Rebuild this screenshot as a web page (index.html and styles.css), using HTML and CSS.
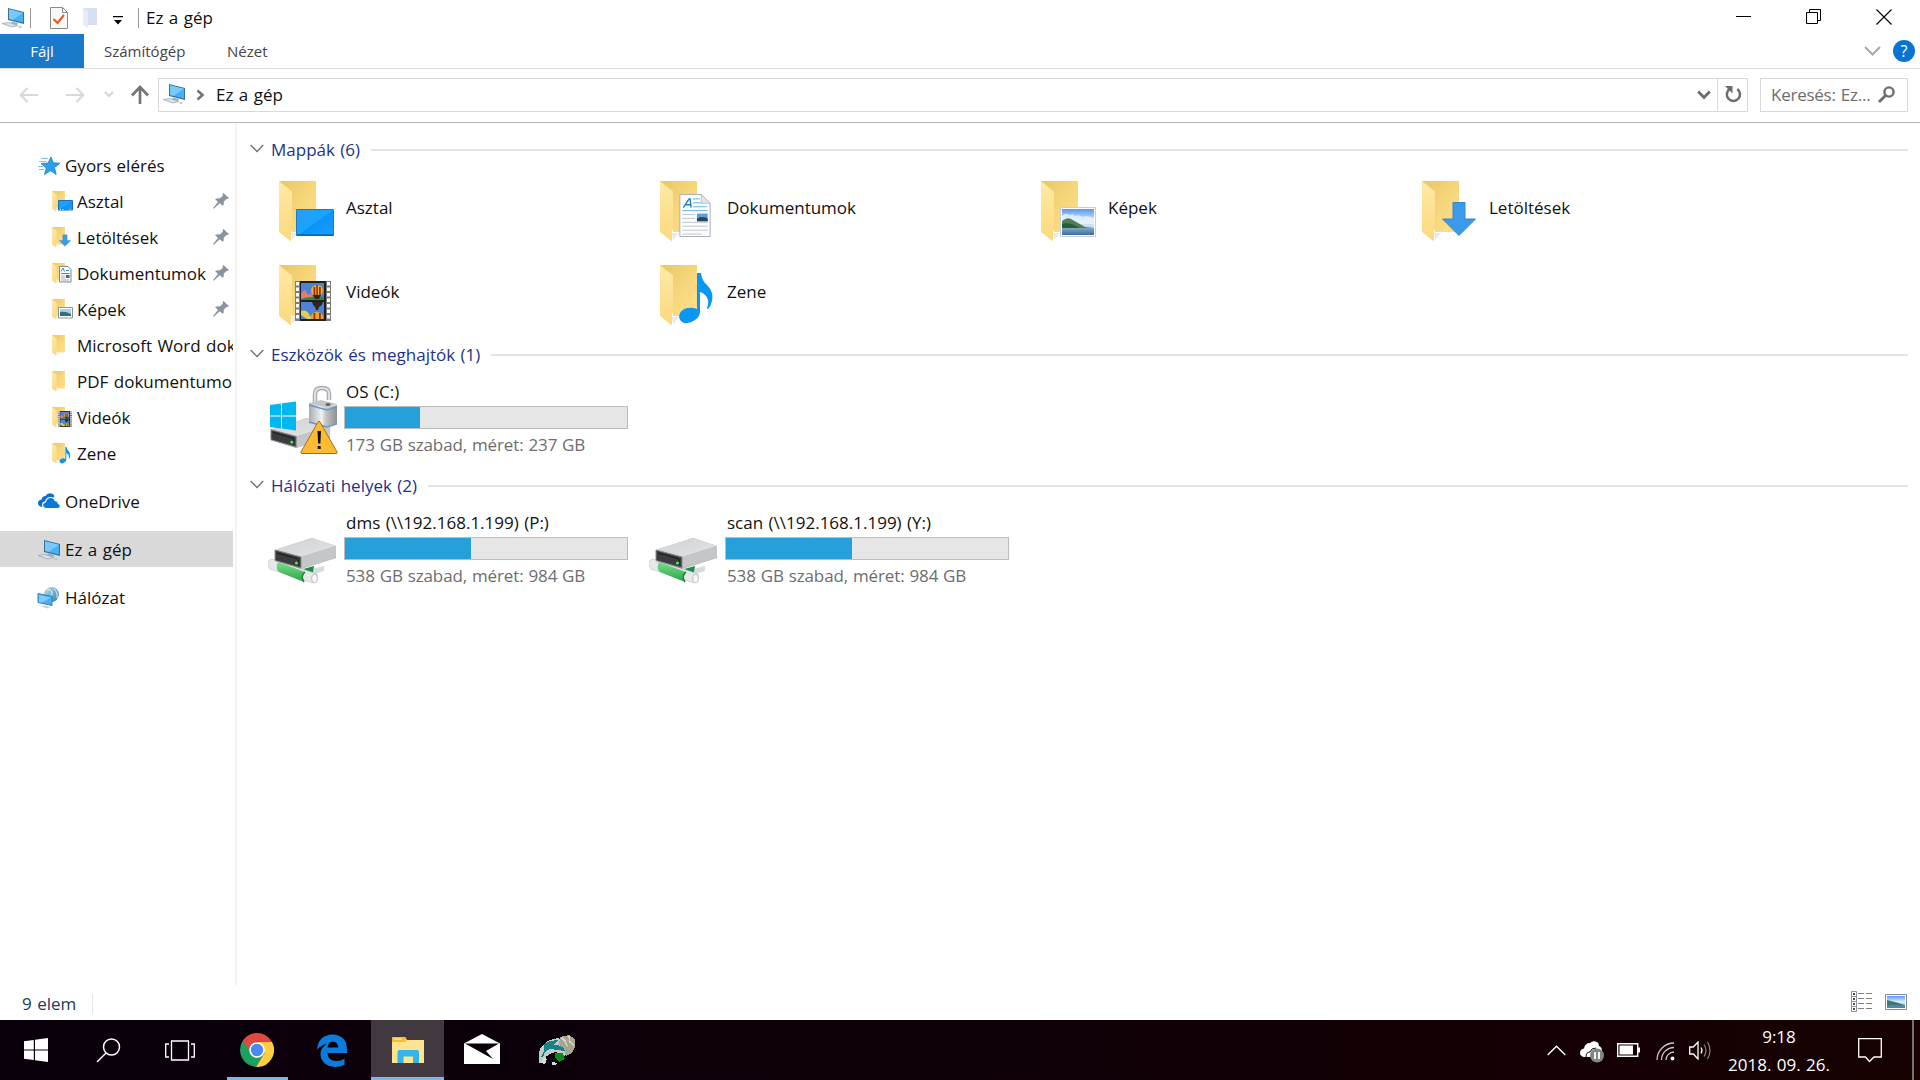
FILE: index.html
```
<!DOCTYPE html>
<html lang="hu">
<head>
    <meta charset="UTF-8">
    <title>Ez a gép</title>
    <link rel="stylesheet" href="styles.css">
</head>
<body>
    <svg class="defs" width="0" height="0">
        <defs>
            <linearGradient id="g-back" x1="0" y1="0" x2="1" y2="1">
                <stop offset="0" stop-color="#e8c664"/><stop offset="0.5" stop-color="#f6d67a"/><stop offset="1" stop-color="#ffe08a"/>
            </linearGradient>
            <linearGradient id="g-flap" x1="0" y1="0" x2="0" y2="1">
                <stop offset="0" stop-color="#ffe9a6"/><stop offset="1" stop-color="#fbd97c"/>
            </linearGradient>
            <linearGradient id="g-blue" x1="0" y1="0" x2="1" y2="1">
                <stop offset="0" stop-color="#2a9df4"/><stop offset="0.5" stop-color="#18a4ff"/><stop offset="0.52" stop-color="#0a94f8"/><stop offset="1" stop-color="#1e9bff"/>
            </linearGradient>
            <linearGradient id="g-sky" x1="0" y1="0" x2="0" y2="1">
                <stop offset="0" stop-color="#5b97ee"/><stop offset="0.45" stop-color="#d3e8fb"/><stop offset="0.7" stop-color="#c8dcea"/>
            </linearGradient>
            <linearGradient id="g-sea" x1="0" y1="0" x2="0" y2="1">
                <stop offset="0" stop-color="#7fa9c4"/><stop offset="1" stop-color="#3c6f9f"/>
            </linearGradient>
            <linearGradient id="g-metal" x1="0" y1="0" x2="1" y2="0">
                <stop offset="0" stop-color="#a9abae"/><stop offset="0.45" stop-color="#f1f2f3"/><stop offset="0.6" stop-color="#c2c4c7"/><stop offset="1" stop-color="#8d9095"/>
            </linearGradient>
            <linearGradient id="g-top" x1="0" y1="0" x2="1" y2="1">
                <stop offset="0" stop-color="#cfd0d2"/><stop offset="1" stop-color="#e4e5e7"/>
            </linearGradient>
            <linearGradient id="g-green" x1="0" y1="0" x2="0" y2="1">
                <stop offset="0" stop-color="#77e08a"/><stop offset="1" stop-color="#2da244"/>
            </linearGradient>
            <linearGradient id="g-globe" x1="0" y1="0" x2="1" y2="1">
                <stop offset="0" stop-color="#c3e2f0"/><stop offset="1" stop-color="#2f7fa8"/>
            </linearGradient>
        </defs>
        <symbol id="folder" viewBox="0 0 37 61">
            <path d="M12 52h7l-6 7z" fill="#e9e9e9"/>
            <path d="M0 0h37v51H13z" fill="url(#g-back)"/>
            <path d="M0 0l13 10.500V44l-1 2v14.500L0 51z" fill="url(#g-flap)"/>
        </symbol>
        <symbol id="photo" viewBox="0 0 36 30">
            <path d="M0 0h36v30H0z" fill="#fff"/>
            <path d="M.5.5h35v29H.5z" fill="none" stroke="#c9ced3"/>
            <path d="M2 2h32v26H2z" fill="url(#g-sky)"/>
            <path d="M2 9q4-4 7-1 4-2 6 1 4-2 7 1 6-2 12 1v6H2z" fill="#e9f3fc" opacity=".8"/>
            <path d="M2 14q5-4 9-2l7 4 7 4 9 1v1H2z" fill="#4d7f55"/>
            <path d="M2 17q6-2 12 1l8 4H2z" fill="#2c5a3b"/>
            <path d="M2 21h32v7H2z" fill="url(#g-sea)"/>
        </symbol>
        <symbol id="film" viewBox="0 0 36 40">
            <path d="M0 0h36v40H0z" fill="#7c7c7c"/>
            <path d="M5 0h26v40H5z" fill="#1f1f1f"/>
            <path d="M6 2h23v17H6zM6 21h23v17H6z" fill="#4c83d8"/>
            <path d="M6 12l4-3 3 5 3-2 3 7H6z" fill="#e27a75"/>
            <path d="M6 18q8-3 23-2v3H6z" fill="#2e8a36"/>
            <path d="M6 30q6-2 9 5l2 3h-5l-6-4z" fill="#e3cf4e"/>
            <path d="M22 4q6 0 6 6 0 3-4 6h-4q-4-3-4-6 0-6 6-6z" fill="#e3b423"/>
            <path d="M18.500 6h1.800v8h-1.800zM24 6h1.800v8H24zM21.300 4h1.600v10h-1.600z" fill="#a72b1c"/>
            <path d="M18 14h8l-2 4h-4zM17 21h11q-1 4-4 5l-1 3h-2l-1-3q-2-1-3-5z" fill="#33241c"/>
            <path d="M22 31q5 0 6 4v3H16v-3q1-4 6-4z" fill="#e3a923"/>
            <path d="M18.500 32h1.800v6h-1.800zM24 32h1.800v6H24z" fill="#a72b1c"/>
            <path d="M2.500 1v38M33.500 1v38" stroke="#fff" stroke-width="3" stroke-dasharray="3.500 2"/>
        </symbol>
        <symbol id="note" viewBox="0 0 34 52">
            <path d="M18 0h4q1 8 6 12 7 7 5 16-1 5-4 8-1 0-1-1 3-7-1-12-2-3-6-4v19q0 6-5 9-5 4-11 3-5-2-5-7 1-6 8-8 5-1 10 1z" fill="#0a96f5"/>
        </symbol>
        <symbol id="sheet" viewBox="0 0 32 44">
            <path d="M.5.5h22l9 9v34H.5z" fill="#fbfcfd" stroke="#a9aeb4"/>
            <path d="M22.500.5v9h9z" fill="#e1e5e9" stroke="#b3b8be" stroke-width=".8"/>
            <path d="M14 5h7M14 9h8M14 13h14M3 17h26" stroke="#5fb4e3"/>
            <path d="M3 21h13M3 25h13M3 29h26M3 33h26M3 37h26M3 41h20" stroke="#c3c7cc"/>
            <path d="M18 20h11v8H18z" fill="#5f9ed4"/><path d="M18 25q5-3 11 0v3H18z" fill="#1f4a66"/>
            <path d="M4 14L10 5l1 0 1 9M6.500 11h5" fill="none" stroke="#1f7fc4" stroke-width="1.400"/>
        </symbol>
        <symbol id="down" viewBox="0 0 34 34">
            <path d="M11 .5h12V17h10.500L17 33.500.5 17H11z" fill="#3b9be8" stroke="#3187d2"/>
        </symbol>
        <symbol id="pc" viewBox="0 0 24 22">
            <path d="M7 1l16 4v12L7 13z" fill="#3a6f93"/>
            <path d="M8 2.300l14 3.500v9.800L8 12z" fill="#45b0fa"/>
            <path d="M8 2.300l14 3.500-10 7L8 12z" fill="#76c8fd"/>
            <path d="M11 14.500l6 1.500-1 2-6-1.500z" fill="#9db1bd"/>
            <path d="M1 16.500l7-1 9 3-6 1.500z" fill="#dbe3e8" stroke="#8fa3b0" stroke-width=".7"/>
            <path d="M18 19l3 .5-1 1.500-3-.5z" fill="#b5c2ca"/>
        </symbol>
        <symbol id="drive" viewBox="0 0 64 32">
            <path d="M1 12L38 0l24 8v12L27 31 1 23z" fill="#a6a7a9"/>
            <path d="M1 11.500L37 .5q1.500-.5 3 0L62 8 29 18.500q-1 .5-2 .3z" fill="url(#g-top)"/>
            <path d="M27 19l35-11v10q0 1.500-1.500 2L27 31z" fill="#c5c6c8"/>
            <path d="M1 12l26 7v11L1 22.500z" fill="#3b3c3e"/>
            <path d="M1 12l26 7v11L1 22.500z" fill="none" stroke="#8e8f91" stroke-width="1"/>
            <path d="M3 15l21 6v6" fill="none" stroke="#1b1b1c"/>
            <circle cx="22.500" cy="25" r="1.500" fill="#4cf04c"/>
        </symbol>
        <symbol id="netdrive" viewBox="0 0 72 72">
            <g transform="translate(-2 0)">
                <path d="M30 59l28-7v5l-22 7z" fill="#d9dcde"/>
                <path d="M30 57l18-5-1 6-12 7z" fill="#1b8c49"/>
                <path d="M2 47q3-3 7-1l42 14q1 6-4 9L4 55q-3-3-2-8z" fill="#e6e8ea" stroke="#c3c7ca" stroke-width=".7"/>
                <path d="M12 48l27 10q-4 5-1 10L13 58q-4-4-1-10z" fill="url(#g-green)"/>
                <path d="M39 58q-5 4-1 10" stroke="#18803a" stroke-width="1.500" fill="none"/>
                <ellipse cx="48.500" cy="64.500" rx="2.800" ry="4.200" fill="#f6f7f8" stroke="#b7bbbf"/>
            </g>
            <use href="#drive" x="6" y="24" width="64" height="32"/>
        </symbol>
        <symbol id="pin" viewBox="0 0 16 16">
            <path d="M10.500 0L16 5.200l-1.500.8-1 0-2.800 2.800q.6 2.500-.8 4.200L6.800 10.200 1 15.500H0V15l5-6-3-3q2.500-1 4.500-.5L9.700 3V1z" fill="#8a949e"/>
        </symbol>
        <symbol id="chev" viewBox="0 0 14 9">
            <path d="M.7 1L7 7.500 13.300 1" fill="none" stroke="#6e6e6e" stroke-width="1.300"/>
        </symbol>
    </svg>

    <div class="window">
        <header class="titlebar">
            <svg class="app-icon" width="24" height="22"><use href="#pc"/></svg>
            <span class="sep"></span>
            <svg class="qa-check" width="18" height="22" viewBox="0 0 18 22"><path d="M.5.5h12l5 5v16H.5z" fill="#f8f8f8" stroke="#8a8a8a"/><path d="M12.500.5v5h5" fill="none" stroke="#8a8a8a"/><path d="M3.500 12l4 4 6.500-8" fill="none" stroke="#e8541c" stroke-width="2"/></svg>
            <svg class="qa-folder" width="14" height="22" viewBox="0 0 14 22"><path d="M0 1h14v17H5z" fill="#d7e0f2"/><path d="M0 1l5 3v17l-5-3z" fill="#e5ebf7"/></svg>
            <svg class="qa-more" width="10" height="9" viewBox="0 0 10 9"><path d="M0 0h10v1.300H0zM1 4h8L5 8.500z" fill="#000"/></svg>
            <span class="sep"></span>
            <span class="title">Ez a gép</span>
            <div class="controls">
                <svg width="16" height="16" viewBox="0 0 16 16"><path d="M0 7.500h15" stroke="#000"/></svg>
                <svg width="16" height="16" viewBox="0 0 16 16"><path d="M.5 3.500h11v11H.5zM3.500 3.500V.5h11v11h-3" fill="none" stroke="#000"/></svg>
                <svg width="16" height="16" viewBox="0 0 16 16"><path d="M.5.5l15 15M15.500.5l-15 15" stroke="#000" stroke-width="1.100"/></svg>
            </div>
        </header>

        <nav class="ribbon">
            <span class="tab file">Fájl</span>
            <span class="tab computer">Számítógép</span>
            <span class="tab view">Nézet</span>
            <svg class="expand" width="17" height="10" viewBox="0 0 17 10"><path d="M1 1l7.500 7.500L16 1" fill="none" stroke="#a8a8a8" stroke-width="2"/></svg>
            <span class="help">?</span>
        </nav>

        <div class="addressbar">
            <svg class="back" width="20" height="16" viewBox="0 0 20 16"><path d="M19 8H2M8.500 1L1.800 8l6.700 7" fill="none" stroke="#d9d9d9" stroke-width="2.200"/></svg>
            <svg class="forward" width="20" height="16" viewBox="0 0 20 16"><path d="M1 8h17M11.500 1l6.700 7-6.700 7" fill="none" stroke="#d9d9d9" stroke-width="2.200"/></svg>
            <svg class="recent" width="10" height="7" viewBox="0 0 10 7"><path d="M1 1l4 4 4-4" fill="none" stroke="#d5d5d5" stroke-width="2"/></svg>
            <svg class="up" width="18" height="20" viewBox="0 0 18 20"><path d="M9 19V3M1 10.500L9 2l8 8.500" fill="none" stroke="#757575" stroke-width="2.700"/></svg>
            <div class="path">
                <svg class="path-icon" width="24" height="22"><use href="#pc"/></svg>
                <svg class="path-arrow" width="9" height="12" viewBox="0 0 9 12"><path d="M1.500 1.500L6.500 6l-5 4.500" fill="none" stroke="#757575" stroke-width="2.600"/></svg>
                <span>Ez a gép</span>
                <svg class="path-drop" width="14" height="10" viewBox="0 0 14 10"><path d="M1.200 1.500L7 7.500l5.800-6" fill="none" stroke="#6d6d6d" stroke-width="2.800"/></svg>
                <span class="refresh"><svg width="17" height="17" viewBox="0 0 17 17"><path d="M12.300 3A6.600 6.600 0 1 1 4.500 3" fill="none" stroke="#6d6d6d" stroke-width="2.500"/><path d="M0 0h7.500v7.500L5 5z" fill="#6d6d6d"/></svg></span>
            </div>
            <div class="search">
                <span>Keresés: Ez...</span>
                <svg width="17" height="17" viewBox="0 0 17 17"><circle cx="11" cy="6" r="4.600" fill="none" stroke="#6d6d6d" stroke-width="2.400"/><path d="M7.500 9.500L1 16" stroke="#6d6d6d" stroke-width="2.800"/></svg>
            </div>
        </div>

        <div class="body">
            <aside class="sidebar">
                <div class="nav root">
                    <svg class="nav-icon" width="24" height="22" viewBox="0 0 24 22"><path d="M14 2l2.200 5.800 6.800.4-5.500 4.300 1.700 7-5.700-3.800-6 3.800L9.300 13 4 8.500l7-.5z" fill="#2aa0ea" stroke="#1d7cc4" stroke-width=".8"/><path d="M4 3.500h7M2 6.500h7M1 11.500h5M2 14.500h5" stroke="#7cc4f0"/></svg>
                    <span>Gyors elérés</span>
                </div>
                <div class="nav">
                    <svg class="nav-icon" width="22" height="22" viewBox="0 0 22 22"><use href="#folder" width="13" height="21"/><path d="M6.500 9.500h14v9.500h-14z" fill="url(#g-blue)" stroke="#1b6fae"/><path d="M8 18.500h11" stroke="#d9efff" stroke-dasharray="1 1.500 1 6"/></svg>
                    <span>Asztal</span><svg class="pin" width="16" height="16"><use href="#pin"/></svg>
                </div>
                <div class="nav">
                    <svg class="nav-icon" width="22" height="22" viewBox="0 0 22 22"><use href="#folder" width="13" height="21"/><use href="#down" x="7" y="7" width="12" height="13"/></svg>
                    <span>Letöltések</span><svg class="pin" width="16" height="16"><use href="#pin"/></svg>
                </div>
                <div class="nav">
                    <svg class="nav-icon" width="22" height="22" viewBox="0 0 22 22"><use href="#folder" width="13" height="21"/><path d="M7.500 3.500h8.500l3 3V19H7.500z" fill="#fff" stroke="#7f858b"/><path d="M9 8.500L11 5l1.500 3.500M14 7.500h3M9 10.500h8.500" fill="none" stroke="#2a94d6"/><path d="M9 13h4M9 15h4M9 17h8" stroke="#8b9198" stroke-width=".8"/><path d="M14 12h3.500v3H14z" fill="#376c8e"/></svg>
                    <span>Dokumentumok</span><svg class="pin" width="16" height="16"><use href="#pin"/></svg>
                </div>
                <div class="nav">
                    <svg class="nav-icon" width="22" height="22" viewBox="0 0 22 22"><use href="#folder" width="13" height="21"/><path d="M6.500 8.500h14V19h-14z" fill="#fff" stroke="#8d959c"/><path d="M8 10h11v7H8z" fill="#a9cef0"/><path d="M8 13q5-1 11 2v2H8z" fill="#356e76"/></svg>
                    <span>Képek</span><svg class="pin" width="16" height="16"><use href="#pin"/></svg>
                </div>
                <div class="nav">
                    <svg class="nav-icon" width="22" height="22" viewBox="0 0 22 22"><use href="#folder" width="13" height="21"/></svg>
                    <span>Microsoft Word dok</span>
                </div>
                <div class="nav">
                    <svg class="nav-icon" width="22" height="22" viewBox="0 0 22 22"><use href="#folder" width="13" height="21"/></svg>
                    <span>PDF dokumentumo</span>
                </div>
                <div class="nav">
                    <svg class="nav-icon" width="22" height="22" viewBox="0 0 22 22"><use href="#folder" width="13" height="21"/><use href="#film" x="6" y="4" width="14" height="16"/></svg>
                    <span>Videók</span>
                </div>
                <div class="nav">
                    <svg class="nav-icon" width="22" height="22" viewBox="0 0 22 22"><use href="#folder" width="13" height="21"/><use href="#note" x="7" y="4" width="12" height="17"/></svg>
                    <span>Zene</span>
                </div>
                <div class="nav root spaced">
                    <svg class="nav-icon" width="24" height="22" viewBox="0 0 24 22"><path d="M5 16q-4-.5-4-4 0-3 3.500-3.500Q5 5 8.500 5q2-3.500 6-2.500 2.500.7 3 3" fill="#0e6fc9"/><path d="M9 17.500q-3.500-.5-3.500-3.500 0-2.500 3-3.200Q9.500 6.500 13.500 6.500q3.500 0 4.800 3.200 2.700 0 3 2.800 2 .7 2 2.500 0 2.500-2.500 2.500z" fill="#0b78d8" stroke="#fff" stroke-width="1.200"/></svg>
                    <span>OneDrive</span>
                </div>
                <div class="nav root spaced active">
                    <svg class="nav-icon" width="24" height="22"><use href="#pc"/></svg>
                    <span>Ez a gép</span>
                </div>
                <div class="nav root spaced">
                    <svg class="nav-icon" width="24" height="22" viewBox="0 0 24 22"><circle cx="14.500" cy="7.500" r="7.500" fill="url(#g-globe)"/><path d="M10 3q4-1 5 2t-3 5M17 2q4 3 3 9" fill="none" stroke="#e6f4fa"/><path d="M1 6.500l14 3v9l-14-3z" fill="#45b0fa" stroke="#2d77a8" stroke-width=".9"/><path d="M2 8l12 2.500-9 5-3-.5z" fill="#7fccfd"/><path d="M6 18.500l7 1.500-2 1.500-6-1.500z" fill="#c4cfd6"/></svg>
                    <span>Hálózat</span>
                </div>
            </aside>

            <main class="content">
                <section class="group">
                    <h2><svg width="14" height="9"><use href="#chev"/></svg><span>Mappák (6)</span></h2>
                    <div class="tiles folders">
                        <div class="tile"><svg width="72" height="72" viewBox="0 0 72 72"><use href="#folder" x="11" y="6" width="37" height="61"/><path d="M28.500 34.500h37v26h-37z" fill="url(#g-blue)" stroke="#2178b8"/><path d="M29 60h36" stroke="#0f4e80"/></svg><span>Asztal</span></div>
                        <div class="tile"><svg width="72" height="72" viewBox="0 0 72 72"><use href="#folder" x="11" y="6" width="37" height="61"/><use href="#sheet" x="30" y="19" width="32" height="43"/></svg><span>Dokumentumok</span></div>
                        <div class="tile"><svg width="72" height="72" viewBox="0 0 72 72"><use href="#folder" x="11" y="6" width="37" height="61"/><use href="#photo" x="29" y="32" width="38" height="30"/></svg><span>Képek</span></div>
                        <div class="tile"><svg width="72" height="72" viewBox="0 0 72 72"><use href="#folder" x="11" y="6" width="37" height="61"/><use href="#down" x="31" y="27" width="34" height="34"/></svg><span>Letöltések</span></div>
                        <div class="tile"><svg width="72" height="72" viewBox="0 0 72 72"><use href="#folder" x="11" y="6" width="37" height="61"/><use href="#film" x="27" y="22" width="36" height="40"/></svg><span>Videók</span></div>
                        <div class="tile"><svg width="72" height="72" viewBox="0 0 72 72"><use href="#folder" x="11" y="6" width="37" height="61"/><use href="#note" x="30" y="14" width="34" height="52"/></svg><span>Zene</span></div>
                    </div>
                </section>

                <section class="group">
                    <h2><svg width="14" height="9"><use href="#chev"/></svg><span>Eszközök és meghajtók (1)</span></h2>
                    <div class="tiles drives">
                        <div class="tile">
                            <svg width="72" height="72" viewBox="0 0 72 72">
                                <use href="#drive" x="2" y="35" width="62" height="31"/>
                                <path d="M47 20v-9q0-6 7-6 7 0 7 6v6" fill="none" stroke="#a3a7ab" stroke-width="4.500"/>
                                <path d="M47 20v-9q0-6 7-6 7 0 7 6v6" fill="none" stroke="#dfe1e4" stroke-width="2.200"/>
                                <path d="M41 20l18 5 10-3v19l-10 4-18-5z" fill="url(#g-metal)"/>
                                <path d="M41 20l12-3 16 4-10 4z" fill="#c2c6ca"/>
                                <path d="M41 22l18 5 10-3M41 39l18 5 10-3" fill="none" stroke="#5f9cc4" stroke-width="1.300"/>
                                <ellipse cx="60" cy="21.500" rx="2.500" ry="1.200" fill="#555"/>
                                <path d="M2 22l11-1.500v12H2zM14 20.300L28 18.500v14H14zM2 33.500h11v12L2 44zM14 33.500h14V47.500l-14-2z" fill="#00b7f0"/>
                                <path d="M50 39q1-2 2 0l17 30q.5 1.500-1 1.500H34q-1.500 0-1-1.500z" fill="#fdbb33" stroke="#a86c17"/>
                                <path d="M49.500 48h3.500l-.6 12.500h-2.300zM49.700 63h3v3h-3z" fill="#111"/>
                            </svg>
                            <div class="info"><p>OS (C:)</p><div class="bar"><i style="width: 26.6%"></i></div><p class="free">173 GB szabad, méret: 237 GB</p></div>
                        </div>
                    </div>
                </section>

                <section class="group">
                    <h2><svg width="14" height="9"><use href="#chev"/></svg><span>Hálózati helyek (2)</span></h2>
                    <div class="tiles drives">
                        <div class="tile">
                            <svg width="72" height="72"><use href="#netdrive"/></svg>
                            <div class="info"><p>dms (\\192.168.1.199) (P:)</p><div class="bar"><i style="width: 44.7%"></i></div><p class="free">538 GB szabad, méret: 984 GB</p></div>
                        </div>
                        <div class="tile">
                            <svg width="72" height="72"><use href="#netdrive"/></svg>
                            <div class="info"><p>scan (\\192.168.1.199) (Y:)</p><div class="bar"><i style="width: 44.7%"></i></div><p class="free">538 GB szabad, méret: 984 GB</p></div>
                        </div>
                    </div>
                </section>
            </main>
        </div>

        <footer class="status">
            <span class="count">9 elem</span>
            <svg class="view-list" width="22" height="22" viewBox="0 0 22 22"><path d="M.5.500h5v20h-5zM.5 5.500h5M.5 10.500h5M.5 15.500h5" fill="none" stroke="#8d939a"/><path d="M2 2h2v2H2zM2 7h2v2H2zM2 12h2v2H2zM2 17h2v2H2z" fill="#5b4a44"/><path d="M7 2.500h14M7 7.500h14M7 12.500h14M7 17.500h14" stroke="#808080" stroke-dasharray="6 2"/></svg>
            <svg class="view-large" width="22" height="16" viewBox="0 0 22 16"><path d="M.5.5h21v15H.5z" fill="#fff" stroke="#7e8d99"/><path d="M2 2h18v12H2z" fill="url(#g-sky)"/><path d="M2 6q9 2 18 5v3H2z" fill="#3c7c66"/><path d="M2 11h18v3H2z" fill="#4d86b4"/></svg>
        </footer>
    </div>

    <div class="taskbar">
        <div class="task start"><svg width="24" height="24" viewBox="0 0 24 24"><path d="M0 3.300l9.800-1.400v9.500H0zM11 1.700L24 0v11.400H11zM0 12.600h9.800v9.500L0 20.700zM11 12.600h13V24l-13-1.700z" fill="#fff"/></svg></div>
        <div class="task"><svg width="25" height="25" viewBox="0 0 25 25"><circle cx="15.500" cy="9" r="8" fill="none" stroke="#fff" stroke-width="1.500"/><path d="M10 15L1 24" stroke="#fff" stroke-width="1.500"/></svg></div>
        <div class="task"><svg width="30" height="21" viewBox="0 0 30 21"><path d="M6.500 1h17v19h-17zM4 4H.7v13H4M26 4h3.300v13H26" fill="none" stroke="#fff" stroke-width="1.300"/></svg></div>
        <div class="task open"><svg width="34" height="34" viewBox="0 0 34 34"><path d="M2.300 8.500A17 17 0 0 0 16 34l8-13-7-4z" fill="#1da160"/><path d="M31.700 8.500A17 17 0 0 1 16 34l8.500-14L17 8.500z" fill="#ffcd42"/><path d="M2.300 8.500A17 17 0 0 1 31.700 8.500H17L9.700 17z" fill="#dd4b3e"/><circle cx="17" cy="17" r="7.800" fill="#fff"/><circle cx="17" cy="17" r="6.200" fill="#4a8af4"/></svg></div>
        <div class="task edge"><svg width="32" height="33" viewBox="0 0 32 33"><path d="M1 15.500Q2.500 1 16.500.5 31 1 31 16v3H11.500q.5 8 9 8 4.500 0 8-2.300v6Q24 33 19 33 6 32 4.500 21 4 14 11 10 6 10.500 1 15.500zM11.500 13.500h10.700q-.3-5.700-5.400-5.700-4.600 0-5.300 5.700z" fill="#0b7bdc"/></svg></div>
        <div class="task explorer"><svg width="32" height="28" viewBox="0 0 32 28"><path d="M0 1h13l2 3h17v23H0z" fill="#fee391"/><path d="M0 1h13l2 3-2 2H0z" fill="#f8bf2b"/><path d="M2 3h8" stroke="#fff0c0"/><path d="M5.500 27V16q0-2 2-2h17.500q2 0 2 2v11H21v-6.500h-9.500V27z" fill="#36b3e8"/></svg></div>
        <div class="task mail"><svg width="36" height="30" viewBox="0 0 36 30"><path d="M0 9.500L18 0l18 9.500V30H0z" fill="#fff"/><path d="M1 9.500h34L22 17l7 8z" fill="#0a0008"/></svg></div>
        <div class="task lizard"><svg width="38" height="30" viewBox="0 0 38 30" shape-rendering="crispEdges"><path d="M2 13L9 6 20 3l3 2 8 6-1 8-6 3-9-3-7 2-2 7H1V19z" fill="#c9c9c9"/><path d="M6 9l6-3 8-1-4 5 9 1 4 3-3 2-6-1-8-1-5 3-2 5H3l3-6z" fill="#148585"/><path d="M22 2l9-2 6 4v8l-3 6-6 3-2-8-5-3z" fill="#a8a58e"/><path d="M24 3l3 3 2 5M31 1l1 6 4 3" fill="none" stroke="#d8d6cc" stroke-width="1.500"/><path d="M10 20l7-3 8 2-1 6-6 4-6-1z" fill="#08090a"/><path d="M17 18h8l2 6-6 3-4-4z" fill="#128a16"/><path d="M3 28l3-6 3 2-2 5zM14 27l5 1-1 2h-4z" fill="#d5dce0"/></svg></div>

        <div class="tray">
            <svg class="t-up" width="19" height="11" viewBox="0 0 19 11"><path d="M.7 10L9.500 1.200 18.300 10" fill="none" stroke="#fff" stroke-width="1.400"/></svg>
            <svg class="t-cloud" width="25" height="22" viewBox="0 0 25 22"><path d="M4 16q-4-1-4-4 0-4 4-4.500Q5 2 10 2q3-3 7-1 2 1 2 4 3 1 3 5v6z" fill="#fff"/><path d="M6 16q0-5 4-5 1-4 6-4" fill="none" stroke="#160003" stroke-width="1"/><circle cx="17" cy="14.500" r="7" fill="#858585"/><path d="M15 11v7M19 11v7" stroke="#fff" stroke-width="1.800"/></svg>
            <svg class="t-battery" width="23" height="14" viewBox="0 0 23 14"><path d="M.7.7h20v12.600H.7z" fill="none" stroke="#fff" stroke-width="1.400"/><path d="M2.500 2.500H16v9H2.500z" fill="#fff"/><path d="M21 4.500h2v5h-2z" fill="#fff"/></svg>
            <svg class="t-wifi" width="19" height="19" viewBox="0 0 19 19"><path d="M1 18A17 17 0 0 1 18 1M5.500 18A12.500 12.500 0 0 1 18 5.500M10 18a8 8 0 0 1 8-8" fill="none" stroke="#cfc9ca" stroke-width="1.300"/><circle cx="16.500" cy="16.500" r="1.900" fill="#fff"/></svg>
            <svg class="t-volume" width="24" height="19" viewBox="0 0 24 19"><path d="M.7 6h3.600L9 1v17l-4.700-5H.7z" fill="none" stroke="#fff" stroke-width="1.300"/><path d="M12 6.500q2 3 0 6" fill="none" stroke="#fff" stroke-width="1.200"/><path d="M15 3.500q4 6 0 12M18.500 1q5 8.500 0 17" fill="none" stroke="#8d8384" stroke-width="1.200"/></svg>
            <div class="clock"><span>9:18</span><span>2018. 09. 26.</span></div>
            <svg class="t-action" width="24" height="25" viewBox="0 0 24 25"><path d="M.7.700h22.600V19H16l-4.500 4.500L7.500 19H.7z" fill="none" stroke="#fff" stroke-width="1.300"/></svg>
        </div>
        <span class="show-desktop"></span>
    </div>
</body>
</html>
```
FILE: styles.css
```
* {
    box-sizing: border-box;
}
body {
    margin: 0;
    width: 1920px;
    height: 1080px;
    overflow: hidden;
    background-color: #fff;
    color: #111;
    font-family: "Open Sans", "Noto Sans", sans-serif;
    font-size: 17px;
    line-height: 24px;
    letter-spacing: 0;
    word-spacing: 1px;
}
svg {
    display: block;
    flex: none;
}
p, h2 {
    margin: 0;
    font-size: 17px;
    font-weight: normal;
}
.defs {
    position: absolute;
}
.window {
    display: flex;
    flex-direction: column;
    height: 1020px;
}

/* title bar */
.titlebar {
    display: flex;
    align-items: center;
    height: 34px;
    flex: none;
    padding: 2px 28px 0 1px;
}
.sep {
    width: 1px;
    height: 20px;
    background-color: #999;
}
.app-icon {
    margin-right: 5px;
}
.qa-check {
    margin-left: 19px;
}
.qa-folder {
    margin-left: 15px;
}
.qa-more {
    margin: 4px 15px 0 16px;
}
.title {
    margin-left: 7px;
}
.controls {
    display: flex;
    gap: 54px;
    margin-left: auto;
    margin-top: -2px;
}

/* ribbon tabs */
.ribbon {
    display: flex;
    align-items: center;
    height: 35px;
    flex: none;
    border-bottom: 1px solid #dadbdc;
    font-size: 15px;
    color: #444;
}
.tab.file {
    width: 84px;
    height: 34px;
    line-height: 34px;
    text-align: center;
    background-color: #1979ca;
    color: #fff;
}
.tab.computer {
    margin-left: 20px;
    width: 123px;
}
.expand {
    margin-left: auto;
}
.help {
    width: 22px;
    height: 22px;
    margin: 0 5px 0 12px;
    border-radius: 50%;
    background-color: #0a74d4;
    color: #fff;
    font-size: 16px;
    line-height: 22px;
    text-align: center;
}

/* address bar */
.addressbar {
    display: flex;
    align-items: center;
    height: 54px;
    flex: none;
    padding: 0 12px 2px 19px;
    border-bottom: 1px solid #b5b5b5;
}
.forward {
    margin-left: 26px;
}
.recent {
    margin-left: 19px;
}
.up {
    margin: 0 9px 0 17px;
}
.path {
    display: flex;
    align-items: center;
    flex: 1;
    height: 34px;
    margin-right: 12px;
    border: 1px solid #d9d9d9;
}
.path-icon {
    margin: -2px 10px 0 3px;
}
.path-arrow {
    margin-right: 11px;
}
.path-drop {
    margin: 1px 6px 0 auto;
}
.refresh {
    display: flex;
    align-items: center;
    justify-content: center;
    width: 30px;
    height: 32px;
    padding-left: 2px;
    border-left: 1px solid #d9d9d9;
}
.search {
    display: flex;
    align-items: center;
    justify-content: space-between;
    width: 148px;
    height: 34px;
    padding: 0 12px 0 10px;
    border: 1px solid #d9d9d9;
    color: #6d6d6d;
    letter-spacing: -0.25px;
}

/* body */
.body {
    display: flex;
    flex: 1;
}
.sidebar {
    width: 237px;
    height: 862px;
    padding: 24px 4px 0 0;
    border-right: 2px solid #f3f3f3;
}
.nav {
    display: flex;
    align-items: center;
    height: 36px;
    padding: 1px 0 0 52px;
    position: relative;
    overflow: hidden;
    white-space: nowrap;
    margin-right: -2px;
}
.nav span {
    margin-left: 3px;
}
.nav.root {
    padding-left: 37px;
}
.nav.root span {
    margin-left: 4px;
}
.nav.spaced {
    margin-top: 12px;
}
.nav.active {
    background-color: #d9d9d9;
}
.pin {
    position: absolute;
    right: 4px;
    top: 10px;
}
.content {
    flex: 1;
    padding: 9px 12px 0 13px;
}
.group h2 {
    display: flex;
    align-items: center;
    height: 36px;
    color: #1e3287;
}
.group h2 svg {
    margin: -4px 7px 0 0;
}
.group h2::after {
    content: "";
    flex: 1;
    height: 2px;
    margin-left: 11px;
    background-color: #e4e4e4;
}
.tiles {
    display: grid;
    grid-template-columns: repeat(4, 381px);
    padding-left: 18px;
}
.folders {
    grid-template-rows: 84px 78px;
    padding-top: 7px;
}
.drives {
    height: 95px;
    padding-top: 10px;
}
.tile {
    display: flex;
}
.tile > span {
    margin: 21px 0 0 6px;
}
.info {
    margin: -3px 0 0 4px;
}
.info p {
    padding-left: 2px;
}
.bar {
    width: 284px;
    height: 23px;
    margin: 2px 0 4px;
    border: 1px solid #bcbcbc;
    background-color: #e6e6e6;
}
.bar i {
    display: block;
    height: 100%;
    background-color: #26a0da;
}
.info .free {
    color: #6d6d6d;
    letter-spacing: -0.1px;
    word-spacing: 0.5px;
}

/* status bar */
.status {
    display: flex;
    align-items: center;
    height: 34px;
    flex: none;
    padding: 0 13px 0 22px;
}
.count {
    width: 71px;
    margin-top: 1px;
    color: #1e395b;
    line-height: 20px;
    border-right: 1px solid #e3e3e3;
}
.view-list {
    margin: -2px 0 0 auto;
}
.view-large {
    margin: -2px 0 0 12px;
}

/* taskbar */
.taskbar {
    display: flex;
    height: 60px;
    background: linear-gradient(90deg, #0a000c, #0d0009 45%, #130004 75%, #170202);
    color: #fff;
}
.task {
    display: flex;
    align-items: center;
    justify-content: center;
    width: 72px;
}
.task.open {
    width: 61px;
    margin: 0 6px 0 11px;
    padding: 3px 2px 0 0;
    border-bottom: 3px solid #76b9ed;
}
.edge {
    width: 76px;
    margin-right: 1px;
    padding-right: 1px;
}
.explorer {
    width: 73px;
    background-color: #42383f;
    border-bottom: 3px solid #76b9ed;
    padding-top: 3px;
}
.mail {
    width: 76px;
    padding-bottom: 2px;
}
.lizard {
    width: 74px;
}
.tray {
    display: flex;
    align-items: center;
    margin-left: auto;
}
.t-cloud {
    margin: 3px 12px 0 14px;
}
.t-wifi {
    margin: 2px 14px 0 16px;
}
.clock {
    display: flex;
    flex-direction: column;
    gap: 4px;
    width: 134px;
    padding: 2px 2px 0 0;
    text-align: center;
}
.t-action {
    margin-left: 11px;
}
.show-desktop {
    width: 8px;
    margin-left: 30px;
    border-left: 2px solid #767071;
}
```
